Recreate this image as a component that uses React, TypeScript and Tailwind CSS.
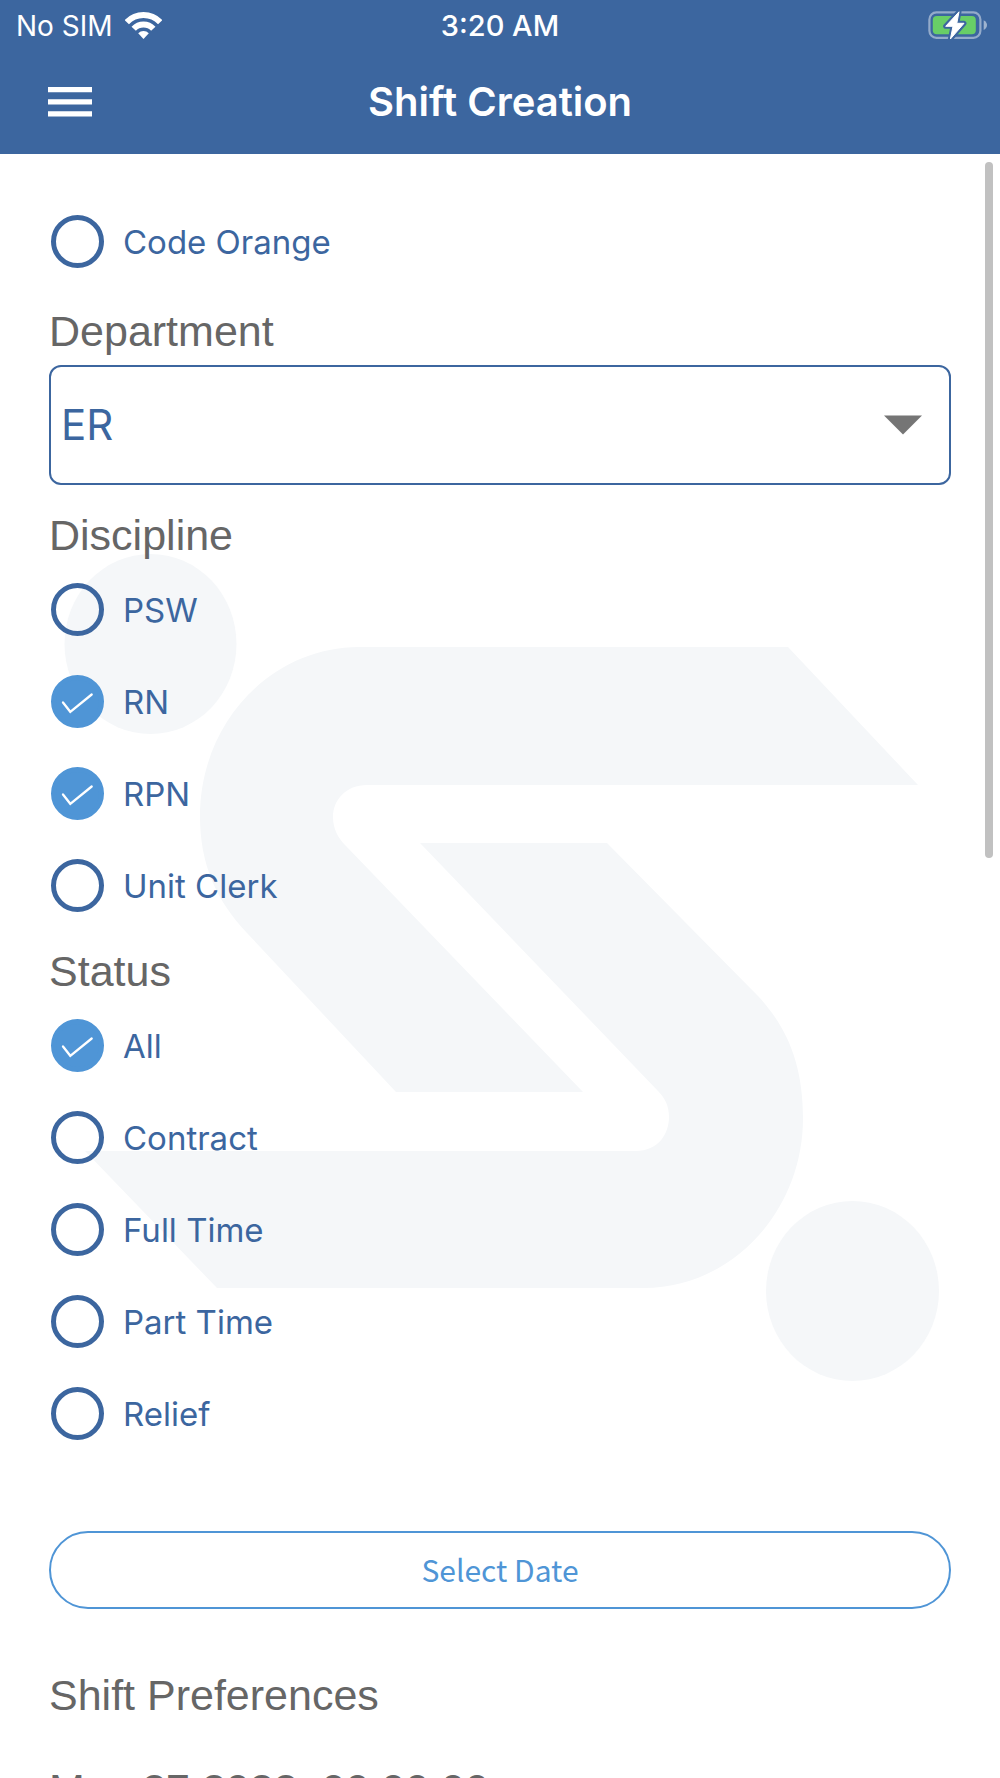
import React, { useState } from 'react';

const DISCIPLINES = ['PSW', 'RN', 'RPN', 'Unit Clerk'];
const STATUSES = ['All', 'Contract', 'Full Time', 'Part Time', 'Relief'];
const DEPARTMENTS = ['ER', 'ICU', 'Surgery'];

function WifiIcon() {
  return (
    <svg width="37" height="27" viewBox="0 0 37 27" fill="none" aria-hidden="true">
      <path d="M1.8 10.2A23 23 0 0 1 35.2 10.2" stroke="#fff" strokeWidth="6" />
      <path d="M8.7 16.7A13.5 13.5 0 0 1 28.3 16.7" stroke="#fff" strokeWidth="6" />
      <path d="M18.5 27L13.2 21.2A7.5 7.5 0 0 1 23.8 21.2Z" fill="#fff" />
    </svg>
  );
}

function BatteryIcon() {
  return (
    <svg width="60" height="29" viewBox="0 0 60 29" fill="none" aria-hidden="true">
      <rect x="1.4" y="1.4" width="51" height="25.4" rx="7" stroke="#fff" strokeOpacity="0.45" strokeWidth="2.2" />
      <path d="M55.7 9.2C58 10.4 59 12.2 59 14.1C59 16 58 17.8 55.7 19Z" fill="#fff" fillOpacity="0.5" />
      <rect x="4.8" y="5" width="43" height="18.2" rx="4" fill="#68ce67" />
      <path
        d="M31 .8L17.7 15.3H25L22.4 28L36 12.3H28.8Z"
        fill="#3c669f"
        stroke="#3c669f"
        strokeWidth="5"
        strokeLinejoin="round"
      />
      <path d="M31 .8L17.7 15.3H25L22.4 28L36 12.3H28.8Z" fill="#fff" stroke="#fff" strokeWidth="1" strokeLinejoin="round" />
    </svg>
  );
}

function Watermark() {
  return (
    <svg className="absolute inset-x-0 top-0 w-full" viewBox="0 154 1000 1624" fill="#f5f7f9" aria-hidden="true">
      <ellipse cx="150.5" cy="644" rx="86" ry="90" />
      <ellipse cx="852.5" cy="1291" rx="86.5" ry="90" />
      <path d="M359 647H788L918 785H367C346 785 333 800 333 817C333 829 338 838 346 846L583 1092H396L247 933C216 900 200 864 200 816C200 722 272 647 359 647Z" />
      <path d="M420 843H607L758 996C788 1028 803 1066 803 1118C803 1212 731 1288 644 1288H217L85 1151H636C658 1151 669 1134 669 1117C669 1106 665 1098 658 1091Z" />
    </svg>
  );
}

interface CheckRowProps {
  label: string;
  checked: boolean;
  onChange: () => void;
}

function CheckRow({ label, checked, onChange }: CheckRowProps) {
  return (
    <label className="ml-0.5 flex h-[92px] items-center gap-[19px] font-[Inter,sans-serif] text-[33px] text-[#3c669f]">
      <span className="relative flex">
        <input
          type="checkbox"
          checked={checked}
          onChange={onChange}
          className="h-[53px] w-[53px] appearance-none rounded-full border-[5px] border-[#3c669f] checked:border-[#4f95d6] checked:bg-[#4f95d6]"
        />
        {checked && (
          <svg className="pointer-events-none absolute inset-0" viewBox="0 0 53 53" fill="none" aria-hidden="true">
            <path d="M12 27.5L19.3 36.8L40.7 19.5" stroke="#fff" strokeWidth="2.3" strokeLinecap="round" />
          </svg>
        )}
      </span>
      <span className="pt-0.5">{label}</span>
    </label>
  );
}

export default function App() {
  const [codeOrange, setCodeOrange] = useState(false);
  const [department, setDepartment] = useState('ER');
  const [disciplines, setDisciplines] = useState<string[]>(['RN', 'RPN']);
  const [statuses, setStatuses] = useState<string[]>(['All']);

  const toggle = (list: string[], item: string) =>
    list.includes(item) ? list.filter((i) => i !== item) : [...list, item];

  return (
    <div className="flex h-screen flex-col overflow-hidden bg-white font-['Liberation_Sans',Arial,sans-serif] text-[43px] leading-[56px] text-[#666666]">
      <header className="shrink-0 bg-[#3c669f] pb-px font-[Inter,sans-serif] text-white">
        {/* Device status bar */}
        <div className="grid h-[51px] grid-cols-3 items-center px-3 leading-8">
          <div className="flex items-center gap-3 pl-1 text-[28px]">
            <span>No SIM</span>
            <WifiIcon />
          </div>
          <span className="text-center text-[29px] font-medium">3:20 AM</span>
          <div className="flex justify-end">
            <BatteryIcon />
          </div>
        </div>

        {/* Nav bar */}
        <div className="grid h-[102px] grid-cols-[1fr_auto_1fr] items-center px-12">
          <button type="button" aria-label="Menu" className="justify-self-start">
            <svg width="44" height="30" viewBox="0 0 44 30" fill="#fff" aria-hidden="true">
              <path d="M0 0H44V5.3H0ZM0 12.2H44V17.5H0ZM0 24.3H44V29.6H0Z" />
            </svg>
          </button>
          <h1 className="text-[40px] leading-[48px] font-semibold">Shift Creation</h1>
        </div>
      </header>

      <main className="relative min-h-0 flex-1 overflow-hidden">
        <Watermark />
        <form className="relative px-[49px] pt-[41px]">
          <CheckRow label="Code Orange" checked={codeOrange} onChange={() => setCodeOrange(!codeOrange)} />

          <label htmlFor="department" className="mt-4 block">
            Department
          </label>
          <div className="relative mt-1.5">
            <select
              id="department"
              value={department}
              onChange={(e) => setDepartment(e.target.value)}
              className="block h-[120px] w-full appearance-none rounded-xl border-2 border-[#3c669f] bg-white px-2.5 font-[Inter,sans-serif] text-[42px] text-[#3c669f]"
            >
              {DEPARTMENTS.map((d) => (
                <option key={d}>{d}</option>
              ))}
            </select>
            <svg
              className="pointer-events-none absolute top-1/2 right-7 -translate-y-1/2"
              width="40"
              height="20"
              viewBox="0 0 40 20"
              aria-hidden="true"
            >
              <path d="M1 .5H39L20 19.5Z" fill="#757575" />
            </svg>
          </div>

          <fieldset className="mt-[22px]">
            <legend>Discipline</legend>
            {DISCIPLINES.map((d) => (
              <CheckRow
                key={d}
                label={d}
                checked={disciplines.includes(d)}
                onChange={() => setDisciplines(toggle(disciplines, d))}
              />
            ))}
          </fieldset>

          <fieldset className="mt-3">
            <legend>Status</legend>
            {STATUSES.map((s) => (
              <CheckRow
                key={s}
                label={s}
                checked={statuses.includes(s)}
                onChange={() => setStatuses(toggle(statuses, s))}
              />
            ))}
          </fieldset>

          <button
            type="button"
            className="mt-[72px] block h-[78px] w-full rounded-full border-2 border-[#4f95d6] bg-white pb-0.5 font-['Noto_Sans_CJK_SC',sans-serif] text-[30px] leading-10 text-[#4f95d6]"
          >
            Select Date
          </button>

          <h2 className="mt-[58px]">Shift Preferences</h2>
          <p className="mt-[38px]">May 27 2022, 00:00:00</p>
        </form>

        {/* Scroll indicator */}
        <div className="absolute top-2 right-[7px] h-3/7 w-2 rounded-full bg-[#c1c1c1]" />
      </main>
    </div>
  );
}
